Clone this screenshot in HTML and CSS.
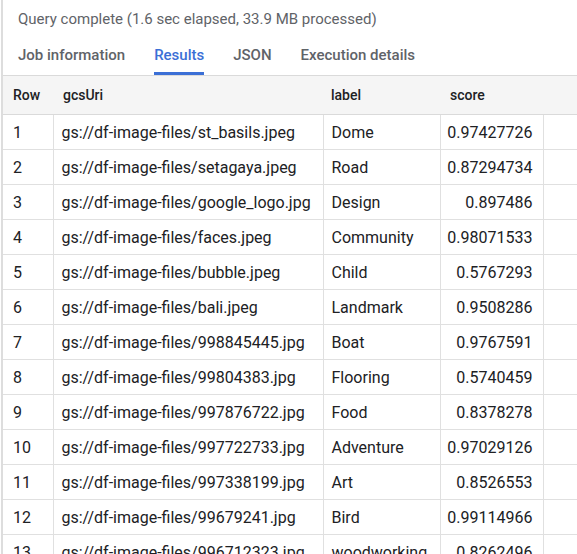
FILE: index.html
```html
<!DOCTYPE html>
<html>
<head>
<meta charset="utf-8">
<link rel="stylesheet" href="styles.css">
</head>
<body>
<div class="panel">
  <div class="status">Query complete (1.6 sec elapsed, 33.9 MB processed)</div>
  <div class="tabs">
    <div class="tab">Job information</div>
    <div class="tab active">Results</div>
    <div class="tab">JSON</div>
    <div class="tab">Execution details</div>
  </div>
  <table class="results">
    <colgroup>
      <col class="c-row"><col class="c-uri"><col class="c-label"><col class="c-score"><col class="c-rest">
    </colgroup>
    <thead>
      <tr><th>Row</th><th class="h-uri">gcsUri</th><th>label</th><th class="h-score">score</th><th></th></tr>
    </thead>
    <tbody>
      <tr><td>1</td><td>gs://df-image-files/st_basils.jpeg</td><td>Dome</td><td class="num">0.97427726</td><td></td></tr>
      <tr><td>2</td><td>gs://df-image-files/setagaya.jpeg</td><td>Road</td><td class="num">0.87294734</td><td></td></tr>
      <tr><td>3</td><td>gs://df-image-files/google_logo.jpg</td><td>Design</td><td class="num">0.897486</td><td></td></tr>
      <tr><td>4</td><td>gs://df-image-files/faces.jpeg</td><td>Community</td><td class="num">0.98071533</td><td></td></tr>
      <tr><td>5</td><td>gs://df-image-files/bubble.jpeg</td><td>Child</td><td class="num">0.5767293</td><td></td></tr>
      <tr><td>6</td><td>gs://df-image-files/bali.jpeg</td><td>Landmark</td><td class="num">0.9508286</td><td></td></tr>
      <tr><td>7</td><td>gs://df-image-files/998845445.jpg</td><td>Boat</td><td class="num">0.9767591</td><td></td></tr>
      <tr><td>8</td><td>gs://df-image-files/99804383.jpg</td><td>Flooring</td><td class="num">0.5740459</td><td></td></tr>
      <tr><td>9</td><td>gs://df-image-files/997876722.jpg</td><td>Food</td><td class="num">0.8378278</td><td></td></tr>
      <tr><td>10</td><td>gs://df-image-files/997722733.jpg</td><td>Adventure</td><td class="num">0.97029126</td><td></td></tr>
      <tr><td>11</td><td>gs://df-image-files/997338199.jpg</td><td>Art</td><td class="num">0.8526553</td><td></td></tr>
      <tr><td>12</td><td>gs://df-image-files/99679241.jpg</td><td>Bird</td><td class="num">0.99114966</td><td></td></tr>
      <tr><td>13</td><td>gs://df-image-files/996712323.jpg</td><td>woodworking</td><td class="num">0.8262496</td><td></td></tr>
    </tbody>
  </table>
</div>
</body>
</html>
```

FILE: styles.css
```css
html, body {
  margin: 0;
  padding: 0;
  background: #ffffff;
  overflow: hidden;
}
body {
  padding-left: 1px;
  font-family: Roboto, "Liberation Sans", sans-serif;
  height: 554px;
}
.panel {
  border-left: 2px solid #dddddd;
  min-height: 554px;
}
.status {
  padding: 9px 0 0 15px;
  font-size: 15px;
  line-height: 20px;
  color: #5f6368;
}
.tabs {
  display: flex;
  gap: 29px;
  padding: 0 0 0 15px;
  margin-top: 7px;
}
.tab {
  font-size: 15px;
  font-weight: 500;
  line-height: 20px;
  color: #5f6368;
  padding: 9px 0 7px;
  border-bottom: 3px solid transparent;
}
.tab.active {
  color: #3b6fd6;
  border-bottom-color: #3b6fd6;
}
.results {
  border-collapse: collapse;
  table-layout: fixed;
  width: 574px;
}
.c-row { width: 50px; }
.c-uri { width: 270px; }
.c-label { width: 117px; }
.c-score { width: 103px; }
.c-rest { width: 34px; }
.results th {
  background: #f5f5f5;
  border-top: 1px solid #dadada;
  border-bottom: 1px solid #dadada;
  height: 39px;
  padding: 0 0 0 8px;
  text-align: left;
  font-size: 14px;
  font-weight: 500;
  color: #202124;
  box-sizing: border-box;
}
.results th:first-child { padding-left: 10px; }
.results th.h-uri { padding-left: 10px; }
.results th.h-score { padding-left: 10px; }
.results td {
  height: 35px;
  box-sizing: border-box;
  border-bottom: 1px solid #e0e0e0;
  border-left: 1px solid #e0e0e0;
  padding: 0 0 0 8px;
  font-size: 16px;
  color: #202124;
  white-space: nowrap;
  overflow: hidden;
}
.results td:first-child {
  border-left: none;
  padding-left: 10px;
}
.results td.num {
  text-align: right;
  padding: 0 10px 0 0;
}
```
